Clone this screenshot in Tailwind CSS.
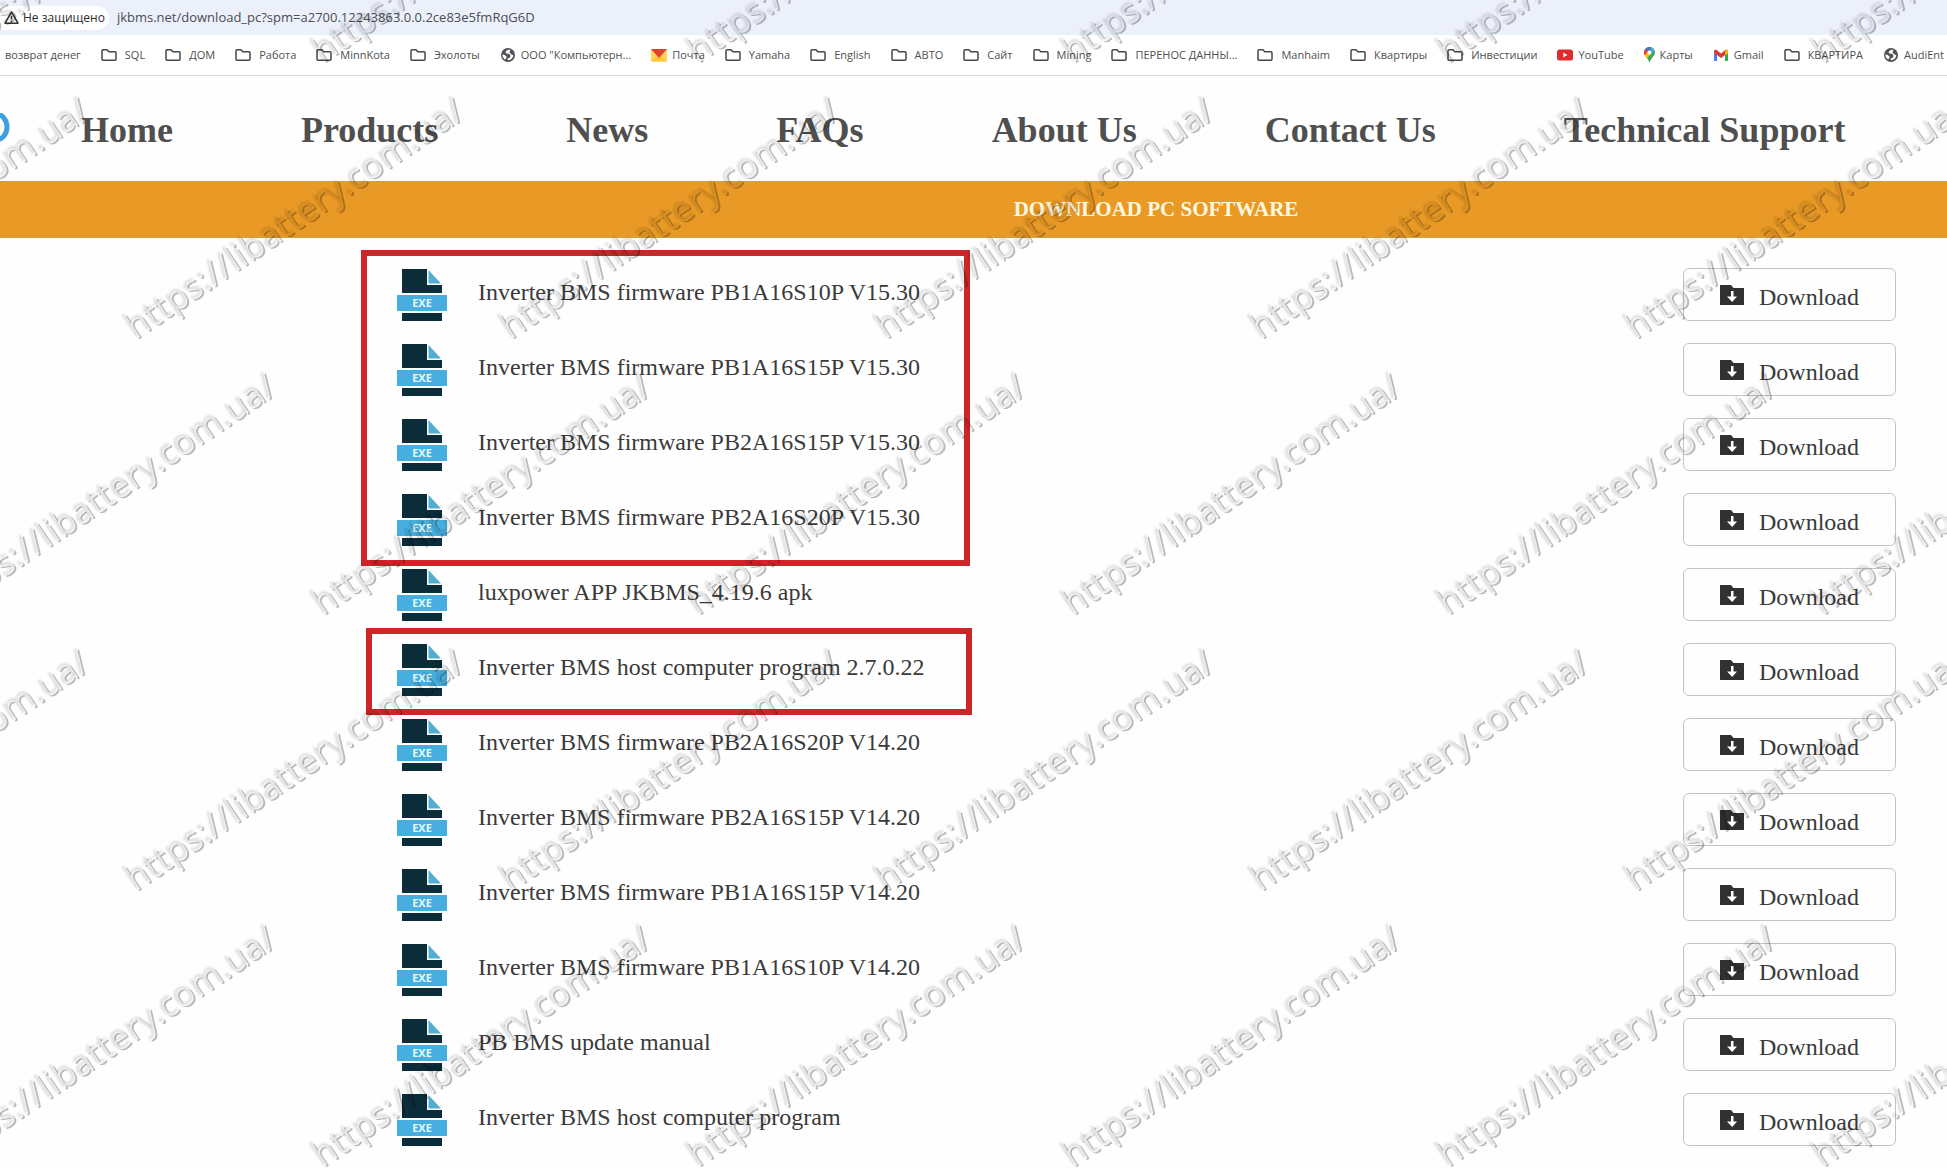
<!DOCTYPE html>
<html lang="en">
<head>
<meta charset="utf-8">
<meta name="viewport" content="width=device-width, initial-scale=1">
<title>Download PC Software</title>
<script src="https://cdn.jsdelivr.net/npm/@tailwindcss/browser@4"></script>
</head>
<body class="relative min-h-screen overflow-x-hidden bg-[#fefefe] font-['Liberation_Serif',serif] text-[#3a3a3a]">

<!-- Shared icons -->
<svg class="hidden" aria-hidden="true">
  <symbol id="i-folder" viewBox="0 0 16 16"><path d="M1 3.800c0-.6.4-1 1-1h4l1.800 1.900H14c.6 0 1 .4 1 1v6.600c0 .6-.4 1-1 1H2c-.6 0-1-.4-1-1z" fill="none" stroke="#474747" stroke-width="1.500" stroke-linejoin="round"/></symbol>
  <symbol id="i-globe" viewBox="0 0 16 16"><circle cx="8" cy="8" r="7" fill="#505357"/><path d="M10.500 2.500 7 3.200 5.500 5.200l1 1.300 2.500.3 1.500 1.700-.6 2.200-2.400.8.500 1.800c3-.2 5-2.300 5.300-5L11 7.200l-1.500-2z" fill="#fff"/><path d="M2.400 7.200 5 8.200l1.700 1.500-.8 2.300-1.400.3A5.600 5.600 0 0 1 2.400 7.200z" fill="#fff"/></symbol>
  <symbol id="i-mail" viewBox="0 0 16 16"><path d="M0 2h16v12.500H0z" fill="#ffd659"/><path d="M0 14.500 8 7l8 7.500z" fill="#ffc93a"/><path d="M0 2h16L8 11z" fill="#dc4431"/></symbol>
  <symbol id="i-youtube" viewBox="0 0 16 16"><rect y="2.500" width="16" height="11" rx="2.500" fill="#e02a2f"/><path d="M6.300 5.500v5l4.200-2.500z" fill="#fff"/></symbol>
  <symbol id="i-maps" viewBox="0 0 11 16"><path d="M5.500 0C2.500 0 0 2.400 0 5.500 0 9 4 10.500 5.500 16 7 10.500 11 9 11 5.500 11 2.400 8.500 0 5.500 0z" fill="#3ba757"/><path d="M5.500 5.500 1.200 2A5.500 5.500 0 0 0 .8 8.300z" fill="#ea4335"/><path d="M1.200 2A5.500 5.500 0 0 1 7.200.3L3.500 4.500z" fill="#4a6fd8"/><path d="M7.200.3A5.500 5.500 0 0 1 10.400 3L6.500 7z" fill="#5b9df5"/><path d="M.8 8.300 4 4.500l3 2.500-4 4.300z" fill="#fbbc04"/><circle cx="5.500" cy="5.500" r="2" fill="#fff"/></symbol>
  <symbol id="i-gmail" viewBox="0 0 16 16"><path d="M1 3.500h3V14H2c-.6 0-1-.4-1-1z" fill="#4285f4"/><path d="M12 3.500h3V13c0 .6-.4 1-1 1h-2z" fill="#34a853"/><path d="M1 3.500 3 2.500l5 4 5-4 2 1v2.500l-7 5-7-5z" fill="#d93c33"/><path d="M12 4 13.500 2.500 15 3.700V6.200L12 8.300z" fill="#fbbc04"/></symbol>
  <symbol id="i-exe" viewBox="0 0 50 52">
    <path d="M5 0h25v16h15v8H5z" fill="#0b2c39"/><path d="M31.500 1v13.500H44z" fill="#52aecf"/>
    <path d="M0 26h50v16H0z" fill="#46afdf"/><path d="M5 44h40v8H5z" fill="#0b2c39"/>
    <text x="25" y="38" text-anchor="middle" font-family="Open Sans, sans-serif" font-size="11" font-weight="700" fill="#e4fbff">EXE</text>
  </symbol>
  <symbol id="i-download" viewBox="0 0 24 20"><path d="M0 0h11l2.500 3H24v17H0z" fill="#303133"/><path d="M11 6h2.500v5.500H17L12.200 17 7 11.500h4z" fill="#fff"/></symbol>
</svg>

<!-- Browser address bar -->
<div class="flex h-[35px] items-center bg-[#ecf0fb] font-['Open_Sans',sans-serif] whitespace-nowrap">
  <button class="flex h-6 items-center gap-1 rounded-r-xl bg-white pr-1 pl-1 text-xs text-[#2b2b2b]">
    <svg class="size-[15px]" viewBox="0 0 15 15" aria-hidden="true"><path d="M7.500 2 14 13.200H1z" fill="none" stroke="#333" stroke-width="1.500" stroke-linejoin="round"/><path d="M7.500 5.800v3.700M7.500 10.600v1.300" stroke="#333" stroke-width="1.500"/></svg>
    Не защищено
  </button>
  <input aria-label="Address" class="ml-2 min-w-0 flex-1 bg-transparent pt-px text-[13px] text-[#4a4d52] outline-none" value="jkbms.net/download_pc?spm=a2700.12243863.0.0.2ce83e5fmRqG6D">
</div>

<!-- Bookmarks -->
<nav id="bookmarks" aria-label="Bookmarks" class="flex h-[41px] items-center gap-5 overflow-hidden border-b border-[#dcdcdf] bg-white pl-[5px] font-['Open_Sans',sans-serif] text-[11px] whitespace-nowrap text-[#4f4f4f]"></nav>

<!-- Site header -->
<header class="flex h-[105px] items-center">
  <div class="flex h-8 w-[81px] shrink-0 items-center overflow-hidden" aria-hidden="true">
    <svg class="h-8 w-3" viewBox="0 0 12 32"><ellipse cx="-4" cy="14" rx="11" ry="13" fill="none" stroke="#3f9fe0" stroke-width="5"/></svg>
  </div>
  <nav aria-label="Main" class="flex gap-32 pt-0.5 text-4xl font-bold whitespace-nowrap text-[#4f4f4f]">
    <a href="#">Home</a><a href="#">Products</a><a href="#">News</a><a href="#">FAQs</a><a href="#">About Us</a><a href="#">Contact Us</a><a href="#">Technical Support</a>
  </nav>
</header>

<h1 class="flex h-[57px] items-center justify-center border-y border-[#c9a04b] bg-[#e99925] pl-[365px] text-[21px] font-bold text-[#fff8e0]">DOWNLOAD PC SOFTWARE</h1>

<main class="relative pt-[30px] pr-[51px] pl-[397px]">
  <ul id="files" class="flex flex-col gap-[22px] text-2xl"></ul>
  <div class="absolute top-3 left-[361px] h-[316px] w-[609px] border-6 border-[#cd2629]" aria-hidden="true"></div>
  <div class="absolute top-[390px] left-[366px] h-[87px] w-[606px] border-6 border-[#cd2629]" aria-hidden="true"></div>
</main>

<!-- Watermark -->
<svg class="pointer-events-none fixed inset-0 h-full w-full" aria-hidden="true">
  <defs>
    <filter id="emboss" filterUnits="userSpaceOnUse" x="0" y="0" width="100%" height="100%">
      <feOffset in="SourceAlpha" dx="-2" dy="-1" result="shift"/>
      <feComposite in="SourceAlpha" in2="shift" operator="out" result="edge"/>
      <feGaussianBlur in="edge" stdDeviation=".7" result="edgeSoft"/>
      <feComponentTransfer in="edgeSoft" result="dark"><feFuncA type="linear" slope=".27"/></feComponentTransfer>
      <feOffset in="SourceAlpha" dx="-3" dy="-2" result="far"/>
      <feGaussianBlur in="far" stdDeviation="1.300" result="soft"/>
      <feComponentTransfer in="soft" result="shade"><feFuncA type="linear" slope=".13"/></feComponentTransfer>
      <feMerge><feMergeNode in="shade"/><feMergeNode in="dark"/></feMerge>
    </filter>
  </defs>
  <g id="marks" filter="url(#emboss)" font-family="Noto Sans, sans-serif" font-size="35"></g>
</svg>

<script>
const bookmarks = [
  ['', 'возврат денег'], ['folder', 'SQL'], ['folder', 'ДОМ'], ['folder', 'Работа'], ['folder', 'MinnKota'],
  ['folder', 'Эхолоты'], ['globe', 'ООО "Компьютерн...'], ['mail', 'Почта'], ['folder', 'Yamaha'],
  ['folder', 'English'], ['folder', 'АВТО'], ['folder', 'Сайт'], ['folder', 'Mining'],
  ['folder', 'ПЕРЕНОС ДАННЫ...'], ['folder', 'Manhaim'], ['folder', 'Квартиры'], ['folder', 'Инвестиции'],
  ['youtube', 'YouTube'], ['maps', 'Карты'], ['gmail', 'Gmail'], ['folder', 'КВАРТИРА'], ['globe', 'AudiEnt'],
];
document.getElementById('bookmarks').innerHTML = bookmarks.map(([icon, name]) => {
  const gap = icon === 'folder' ? 'gap-2' : 'gap-[5px]';
  const size = icon === 'maps' ? 'h-4 w-[11px]' : 'size-4';
  const svg = icon ? `<svg class="${size}" aria-hidden="true"><use href="#i-${icon}"/></svg>` : '';
  return `<a href="#" class="flex shrink-0 items-center ${gap}">${svg}${name}</a>`;
}).join('');

const files = [
  'Inverter BMS firmware PB1A16S10P V15.30', 'Inverter BMS firmware PB1A16S15P V15.30',
  'Inverter BMS firmware PB2A16S15P V15.30', 'Inverter BMS firmware PB2A16S20P V15.30',
  'luxpower APP JKBMS_4.19.6 apk', 'Inverter BMS host computer program 2.7.0.22',
  'Inverter BMS firmware PB2A16S20P V14.20', 'Inverter BMS firmware PB2A16S15P V14.20',
  'Inverter BMS firmware PB1A16S15P V14.20', 'Inverter BMS firmware PB1A16S10P V14.20',
  'PB BMS update manual', 'Inverter BMS host computer program',
];
document.getElementById('files').innerHTML = files.map(name => `
  <li class="flex h-[53px] items-center">
    <svg class="h-[52px] w-[50px] shrink-0" aria-hidden="true"><use href="#i-exe"/></svg>
    <span class="ml-[31px] pb-1.5">${name}</span>
    <button class="ml-auto flex h-full w-[213px] items-center justify-center gap-[15px] rounded-md border border-[#c4c4c4]" aria-label="Download ${name}">
      <svg class="h-5 w-6" aria-hidden="true"><use href="#i-download"/></svg><span class="pt-1">Download</span>
    </button>
  </li>`).join('');

// Staggered diagonal marks: every other line is shifted by half a step
let marks = '';
for (let row = 0; row < 5; row++)
  for (let col = -2; col < 6; col++) {
    const x = (row % 2 ? 137 : 324) + col * 375, y = 65 + row * 276;
    marks += `<text transform="translate(${x} ${y}) rotate(-34)">https://libattery.com.ua/</text>`;
  }
document.getElementById('marks').innerHTML = marks;
</script>
</body>
</html>
